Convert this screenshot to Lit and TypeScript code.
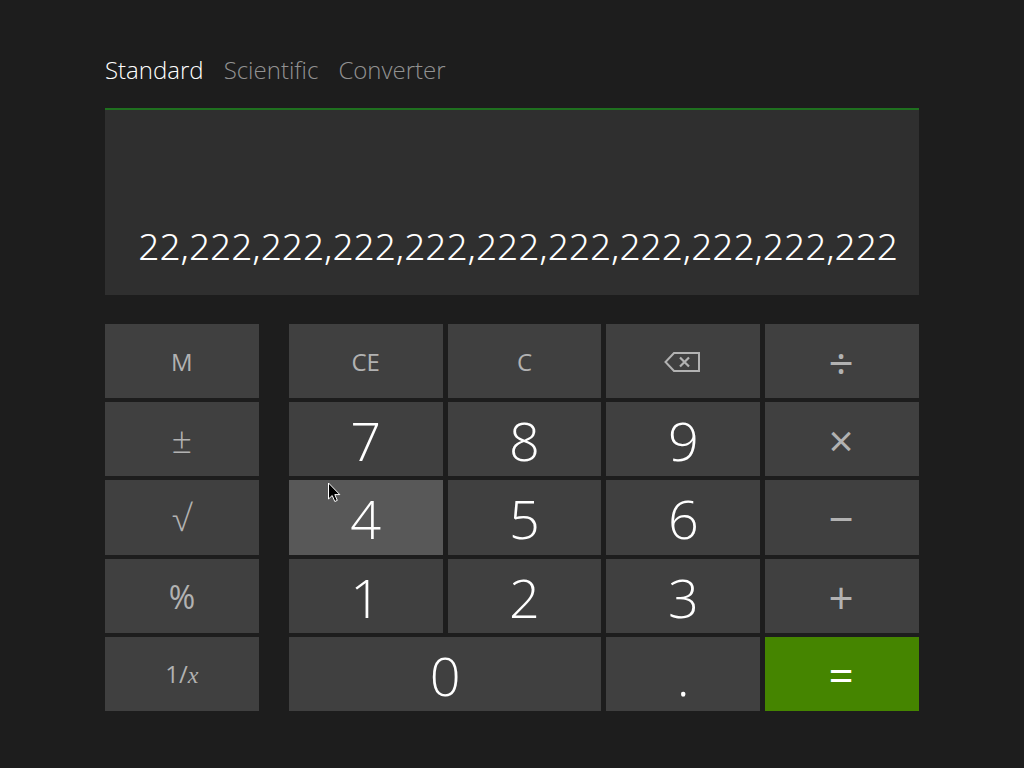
import { LitElement, html, css, nothing } from "lit";
import { customElement, state } from "lit/decorators.js";
import { classMap } from "lit/directives/class-map.js";

type Kind = "digit" | "word" | "sign" | "percent" | "operator" | "icon" | "equals";

interface Key {
  id: string;
  label: string;
  kind: Kind;
  side?: boolean;
  wide?: boolean;
}

const KEYS: Key[] = [
  { id: "M", label: "Memory", kind: "word", side: true },
  { id: "CE", label: "Clear entry", kind: "word" },
  { id: "C", label: "Clear", kind: "word" },
  { id: "back", label: "Backspace", kind: "icon" },
  { id: "÷", label: "Divide", kind: "operator" },
  { id: "±", label: "Negate", kind: "sign", side: true },
  { id: "7", label: "7", kind: "digit" },
  { id: "8", label: "8", kind: "digit" },
  { id: "9", label: "9", kind: "digit" },
  { id: "×", label: "Multiply", kind: "operator" },
  { id: "√", label: "Square root", kind: "sign", side: true },
  { id: "4", label: "4", kind: "digit" },
  { id: "5", label: "5", kind: "digit" },
  { id: "6", label: "6", kind: "digit" },
  { id: "−", label: "Subtract", kind: "operator" },
  { id: "%", label: "Percent", kind: "percent", side: true },
  { id: "1", label: "1", kind: "digit" },
  { id: "2", label: "2", kind: "digit" },
  { id: "3", label: "3", kind: "digit" },
  { id: "+", label: "Add", kind: "operator" },
  { id: "1/x", label: "Reciprocal", kind: "word", side: true },
  { id: "0", label: "0", kind: "digit", wide: true },
  { id: ".", label: "Decimal point", kind: "digit" },
  { id: "=", label: "Equals", kind: "equals" },
];

const MODES = ["Standard", "Scientific", "Converter"];

@customElement("app-root")
export class AppRoot extends LitElement {
  @state() private mode = "Standard";
  @state() private hovered = "4";

  static styles = css`
    :host {
      display: flex;
      flex-direction: column;
      box-sizing: border-box;
      min-height: 100vh;
      padding: 52px 105px 57px;
      background: #1d1d1d;
      color: #fff;
      font-family: "Open Sans", "Noto Sans", sans-serif;
      font-weight: 300;
    }
    button {
      margin: 0;
      padding: 0;
      border: 0;
      font: inherit;
      color: inherit;
      background: none;
    }
    .modes {
      display: flex;
      gap: 20px;
      margin-bottom: 20px;
    }
    .mode {
      font-size: 24px;
      line-height: 36px;
      color: #929292;
    }
    .mode.current {
      color: #fff;
    }
    .display {
      display: flex;
      align-items: flex-end;
      justify-content: flex-end;
      box-sizing: border-box;
      height: 187px;
      padding: 0 21px 20px;
      border-top: 2px solid #1f701f;
      background: #2f2f2f;
      font-family: "Noto Sans", "Open Sans", sans-serif;
      font-size: 37px;
      line-height: 58px;
      font-weight: 350;
    }
    .keypad {
      flex: 1;
      display: grid;
      grid-template-columns: 1fr 20px repeat(4, 1fr);
      grid-template-rows: repeat(5, 1fr);
      gap: 4px 5px;
      margin-top: 29px;
    }
    .key {
      position: relative;
      display: flex;
      align-items: center;
      justify-content: center;
      padding-top: 2px;
      background: #404040;
      color: #b2b2b2;
      line-height: 1;
      min-height: 0;
    }
    .side {
      grid-column: 1;
    }
    .side + .key {
      grid-column: 3;
    }
    .side + .key.wide {
      grid-column: 3 / span 2;
    }
    .word {
      font-size: 24px;
      font-weight: 400;
    }
    .sign {
      font-size: 36px;
    }
    .percent {
      font-size: 32px;
      font-weight: 400;
    }
    .operator {
      font-size: 44px;
      font-weight: 400;
    }
    .icon,
    .operator,
    .equals {
      padding-right: 2px;
    }
    .digit {
      font-size: 54px;
      color: #fff;
    }
    .equals {
      font-size: 44px;
      font-weight: 400;
      color: #fff;
      background: #458500;
    }
    .hovered {
      background: #585858;
    }
    .variable {
      font-family: "Liberation Serif", serif;
      font-style: italic;
    }
    .backspace {
      width: 36px;
      height: 20px;
    }
    .pointer {
      position: absolute;
      left: 39px;
      top: 2px;
      width: 13px;
      height: 21px;
    }
  `;

  private face(key: Key) {
    if (key.id === "back") {
      return html`<svg class="backspace" viewBox="0 0 36 20" fill="none" stroke="currentColor" aria-hidden="true">
        <path d="M10 1H35V19H10L1.500 10Z" stroke-width="2" />
        <path d="M16 5.500L25 14.500M25 5.500L16 14.500" stroke-width="2.200" />
      </svg>`;
    }
    if (key.id === "1/x") {
      return html`<span>1/<span class="variable">x</span></span>`;
    }
    return key.id;
  }

  private pointer() {
    return html`<svg class="pointer" viewBox="0 0 13 21" aria-hidden="true">
      <path d="M.500 1V17L4.200 13.500L6.800 19.500L9.300 18.400L6.800 12.600H11.800Z" fill="#000" stroke="#fff" />
    </svg>`;
  }

  render() {
    return html`
      <nav class="modes" aria-label="Calculator mode">
        ${MODES.map(
          (m) => html`<button
            class=${classMap({ mode: true, current: m === this.mode })}
            aria-pressed=${m === this.mode}
            @click=${() => (this.mode = m)}
          >${m}</button>`
        )}
      </nav>
      <output class="display" aria-label="Result">22,222,222,222,222,222,222,222,222,222,222</output>
      <div class="keypad">
        ${KEYS.map(
          (k) => html`<button
            class=${classMap({
              key: true,
              [k.kind]: true,
              side: !!k.side,
              wide: !!k.wide,
              hovered: k.id === this.hovered,
            })}
            aria-label=${k.label}
            @mouseenter=${() => (this.hovered = k.id)}
          >${this.face(k)}${k.id === this.hovered ? this.pointer() : nothing}</button>`
        )}
      </div>
    `;
  }
}
